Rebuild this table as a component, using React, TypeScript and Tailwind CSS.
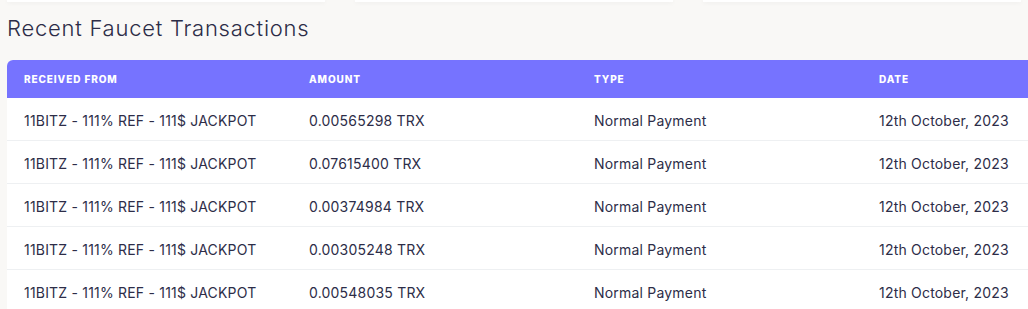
import React from 'react';

const rows = [
  { from: '11BITZ - 111% REF - 111$ JACKPOT', amount: '0.00565298 TRX', type: 'Normal Payment', date: '12th October, 2023' },
  { from: '11BITZ - 111% REF - 111$ JACKPOT', amount: '0.07615400 TRX', type: 'Normal Payment', date: '12th October, 2023' },
  { from: '11BITZ - 111% REF - 111$ JACKPOT', amount: '0.00374984 TRX', type: 'Normal Payment', date: '12th October, 2023' },
  { from: '11BITZ - 111% REF - 111$ JACKPOT', amount: '0.00305248 TRX', type: 'Normal Payment', date: '12th October, 2023' },
  { from: '11BITZ - 111% REF - 111$ JACKPOT', amount: '0.00548035 TRX', type: 'Normal Payment', date: '12th October, 2023' },
];

const headers = ['Received From', 'Amount', 'Type', 'Date'];

export default function App() {
  return (
    <div
      className="h-[309px] w-full overflow-hidden bg-[#f9f8f6]"
      style={{ fontFamily: 'Inter, "Noto Sans", sans-serif' }}
    >
      {/* bottoms of the stat cards above, cut off */}
      <div className="flex gap-[30px] px-[7px]">
        <div className="h-[2px] flex-1 bg-white shadow-[0_1px_4px_rgba(0,0,0,0.06)]" />
        <div className="h-[2px] flex-1 bg-white shadow-[0_1px_4px_rgba(0,0,0,0.06)]" />
        <div className="h-[2px] flex-1 bg-white shadow-[0_1px_4px_rgba(0,0,0,0.06)]" />
      </div>

      <div className="pl-[7px]">
        <h2 className="mt-[12px] text-[22px] font-light leading-[28px] tracking-[0.75px] text-[#2c2c47]">
          Recent Faucet Transactions
        </h2>

        <div className="mt-[18px] w-[1140px] overflow-hidden rounded-t-[6px] bg-white">
          <div className="grid h-[38px] grid-cols-4 items-center bg-[#7673ff]">
            {headers.map((h) => (
              <div key={h} className="pl-[17px] text-[10px] font-extrabold uppercase tracking-[0.9px] text-white">
                {h}
              </div>
            ))}
          </div>
          {rows.map((r, i) => (
            <div
              key={i}
              className="grid h-[43px] grid-cols-4 items-center border-b border-[#eef0f2] pt-[2px] text-[14px] tracking-[0.2px] text-[#2d2d48]"
            >
              <div className="pl-[17px]">{r.from}</div>
              <div className="pl-[17px]">{r.amount}</div>
              <div className="pl-[17px]">{r.type}</div>
              <div className="pl-[17px]">{r.date}</div>
            </div>
          ))}
        </div>
      </div>
    </div>
  );
}
